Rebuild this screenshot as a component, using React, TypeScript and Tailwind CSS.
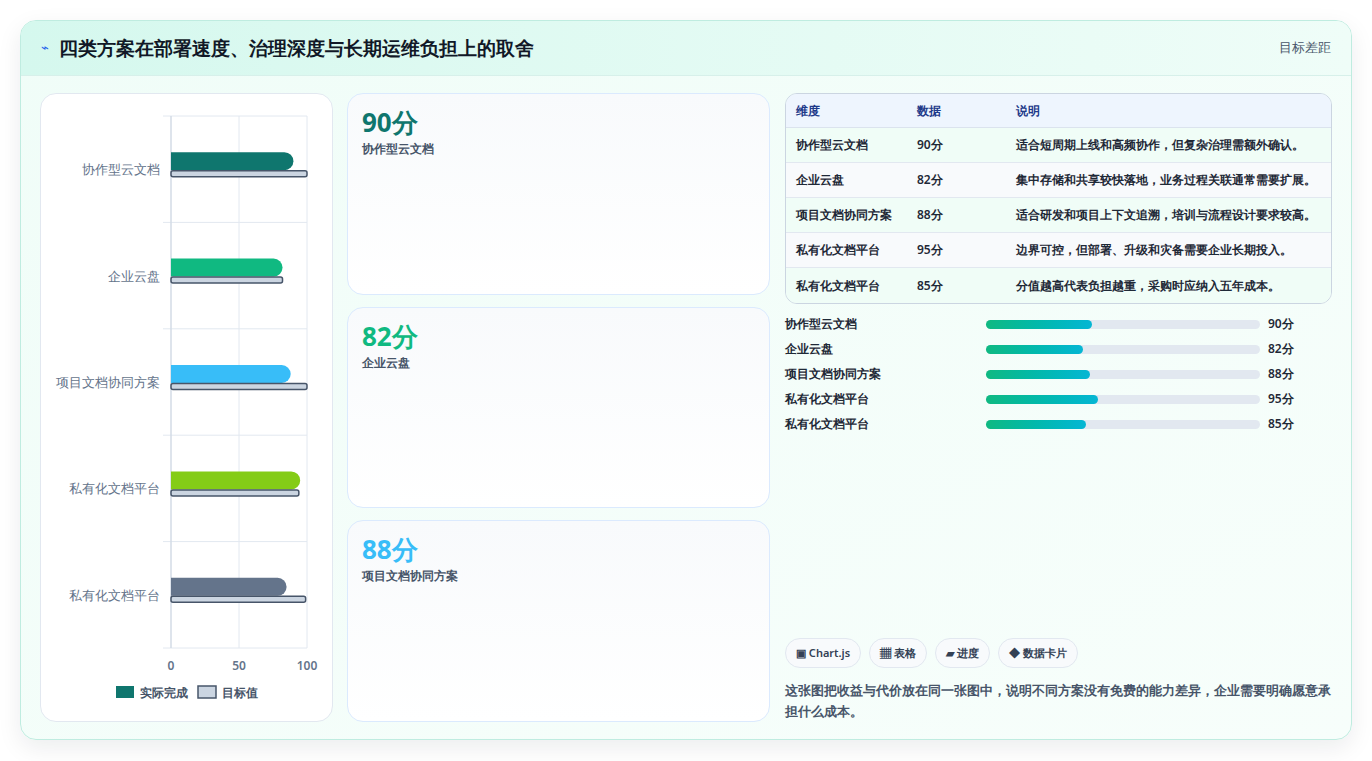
const rows = [
  { name: "协作型云文档", value: 90, note: "适合短周期上线和高频协作，但复杂治理需额外确认。" },
  { name: "企业云盘", value: 82, note: "集中存储和共享较快落地，业务过程关联通常需要扩展。" },
  { name: "项目文档协同方案", value: 88, note: "适合研发和项目上下文追溯，培训与流程设计要求较高。" },
  { name: "私有化文档平台", value: 95, note: "边界可控，但部署、升级和灾备需要企业长期投入。" },
  { name: "私有化文档平台", value: 85, note: "分值越高代表负担越重，采购时应纳入五年成本。" },
];

const bars = [
  { name: "协作型云文档", actual: 90, target: 100, color: "#0f766e" },
  { name: "企业云盘", actual: 82, target: 82, color: "#10b981" },
  { name: "项目文档协同方案", actual: 88, target: 100, color: "#38bdf8" },
  { name: "私有化文档平台", actual: 95, target: 94, color: "#84cc16" },
  { name: "私有化文档平台", actual: 85, target: 99, color: "#64748b" },
];

const cards = [
  { value: "90分", name: "协作型云文档", color: "text-[#0f766e]" },
  { value: "82分", name: "企业云盘", color: "text-[#10b981]" },
  { value: "88分", name: "项目文档协同方案", color: "text-[#38bdf8]" },
];

function Chart() {
  // plot area in svg coords: x 130..266, y 22..554
  const x0 = 130;
  const w = 136;
  const top = 22;
  const band = 106.4;
  return (
    <svg width="292" height="627" className="block">
      {[0, 50, 100].map((t) => (
        <line key={t} x1={x0 + (w * t) / 100} x2={x0 + (w * t) / 100} y1={top} y2={top + band * 5} stroke="#e2e8f0" />
      ))}
      {[0, 1, 2, 3, 4, 5].map((i) => (
        <line key={i} x1={x0 - 8} x2={x0 + w} y1={top + band * i} y2={top + band * i} stroke="#e2e8f0" />
      ))}
      <line x1={x0} x2={x0} y1={top} y2={top + band * 5} stroke="#cbd5e1" />
      {bars.map((b, i) => {
        const cy = top + band * i + band / 2;
        const aw = (w * b.actual) / 100;
        const tw = (w * b.target) / 100;
        return (
          <g key={i}>
            <text x={x0 - 11} y={cy + 5} textAnchor="end" fontSize="13" fill="#64748b">{b.name}</text>
            <path d={`M${x0} ${cy - 17} H${x0 + aw - 9} A9 9 0 0 1 ${x0 + aw - 9} ${cy + 1} H${x0} Z`} fill={b.color} />
            <rect x={x0} y={cy + 1.5} width={tw} height={6} rx={2} fill="#cbd5e1" stroke="#475569" strokeWidth="1.5" />
          </g>
        );
      })}
      {[0, 50, 100].map((t) => (
        <text key={t} x={x0 + (w * t) / 100} y={576} textAnchor="middle" fontSize="12" fontWeight="600" fill="#64748b">{t}</text>
      ))}
      <rect x={75} y={592} width={18} height={12} fill="#0f766e" />
      <text x={99} y={603} fontSize="12" fontWeight="600" fill="#475569">实际完成</text>
      <rect x={157} y={592} width={18} height={12} fill="#cbd5e1" stroke="#475569" strokeWidth="1.5" />
      <text x={181} y={603} fontSize="12" fontWeight="600" fill="#475569">目标值</text>
    </svg>
  );
}

export default function App() {
  return (
    <div className="h-[761px] w-[1372px] bg-white p-5 [font-family:'Liberation_Sans','Noto_Sans_CJK_SC',sans-serif]">
      <div className="flex h-[720px] flex-col overflow-hidden rounded-2xl border border-[#bfece0] bg-gradient-to-br from-[#f0fdf8] to-[#f7fefb] shadow-[0_8px_24px_rgba(15,23,42,0.08)]">
        <div className="flex h-[55px] shrink-0 items-center justify-between border-b border-[#d7f0ea] bg-gradient-to-r from-[#d5f8ee] to-[#effdf8] px-5">
          <div className="flex items-center gap-2.5">
            <span className="text-[13px] text-[#2563eb]">⌁</span>
            <h1 className="text-[19px] font-bold text-[#111827]">四类方案在部署速度、治理深度与长期运维负担上的取舍</h1>
          </div>
          <span className="text-[13px] text-[#475569]">目标差距</span>
        </div>
        <div className="flex flex-1 gap-3.5 px-[19px] pt-[17px] pb-[18px]">
          <div className="w-[293px] shrink-0 rounded-2xl border border-[#e2e8f0] bg-white">
            <Chart />
          </div>
          <div className="flex w-[423px] shrink-0 flex-col gap-3">
            {cards.map((c) => (
              <div key={c.value} className="flex-1 rounded-2xl border border-[#dbeafe] bg-gradient-to-b from-[#f8fafc] to-white px-3.5 py-2.5">
                <div className={`text-[26px] font-bold leading-9 ${c.color}`}>{c.value}</div>
                <div className="text-[12px] font-semibold text-[#475569]">{c.name}</div>
              </div>
            ))}
          </div>
          <div className="flex flex-1 flex-col pl-[1px]">
            <div className="overflow-hidden rounded-xl border border-[#cbd5e1]">
              <div className="flex h-[34px] items-center border-b border-[#dbe3ee] bg-[#eef5fe] text-[12px] font-semibold text-[#1e3a8a]">
                <span className="w-[131px] pl-2.5">维度</span>
                <span className="w-[99px]">数据</span>
                <span>说明</span>
              </div>
              {rows.map((r, i) => (
                <div key={i} className={`flex h-[35px] items-center text-[12px] font-semibold text-[#1f2937] ${i < 4 ? "border-b border-[#e2e8f0]" : ""} ${i % 2 === 0 ? "bg-[#f0fdf7]" : "bg-[#f8fafc]"}`}>
                  <span className="w-[131px] pl-2.5">{r.name}</span>
                  <span className="w-[99px]">{r.value}分</span>
                  <span>{r.note}</span>
                </div>
              ))}
            </div>
            <div className="mt-[11px] flex flex-col gap-[7px] pr-[38px]">
              {rows.map((r, i) => (
                <div key={i} className="flex h-[18px] items-center text-[12px] font-semibold text-[#1f2937]">
                  <span className="w-[201px]">{r.name}</span>
                  <div className="h-[9px] flex-1 rounded-full bg-[#e2e8f0]">
                    <div className="h-full rounded-full bg-gradient-to-r from-[#10b981] to-[#06b6d4]" style={{ width: `${r.value * 0.43}%` }} />
                  </div>
                  <span className="w-[34px] pl-2">{r.value}分</span>
                </div>
              ))}
            </div>
            <div className="mt-auto flex gap-2">
              {["▣ Chart.js", "▦ 表格", "▰ 进度", "◆ 数据卡片"].map((t) => (
                <span key={t} className="rounded-full border border-[#e2e8f0] bg-[#f8fafc] px-2.5 py-1.5 text-[11px] font-semibold text-[#334155]">{t}</span>
              ))}
            </div>
            <p className="mt-3 text-[13px] font-semibold leading-[21px] text-[#475569]">这张图把收益与代价放在同一张图中，说明不同方案没有免费的能力差异，企业需要明确愿意承担什么成本。</p>
          </div>
        </div>
      </div>
    </div>
  );
}
